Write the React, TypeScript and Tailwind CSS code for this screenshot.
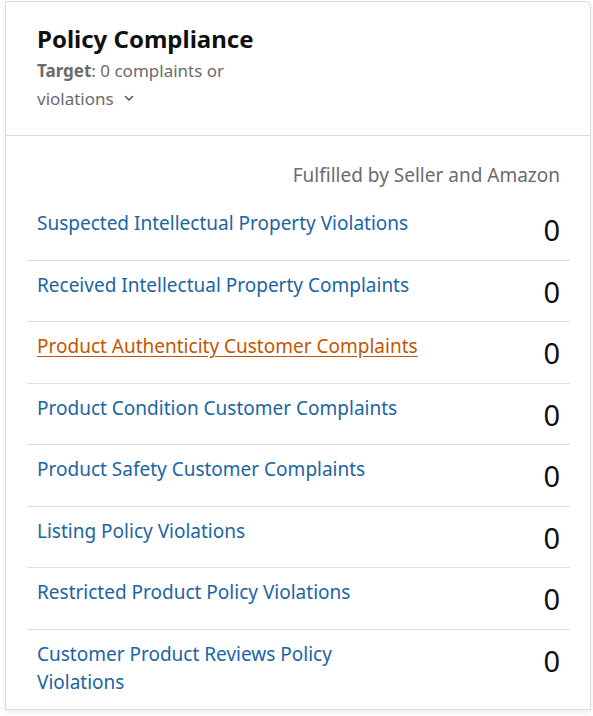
import React from 'react';

const rows = [
    { label: 'Suspected Intellectual Property Violations', count: 0 },
    { label: 'Received Intellectual Property Complaints', count: 0 },
    { label: 'Product Authenticity Customer Complaints', count: 0, active: true },
    { label: 'Product Condition Customer Complaints', count: 0 },
    { label: 'Product Safety Customer Complaints', count: 0 },
    { label: 'Listing Policy Violations', count: 0 },
    { label: 'Restricted Product Policy Violations', count: 0 },
    { label: 'Customer Product Reviews Policy Violations', count: 0, narrow: true },
];

function ChevronDown() {
    return (
        <svg className="inline-block ml-[10px] mb-[3px]" width="10" height="7" viewBox="0 0 10 7" fill="none">
            <path d="M1.5 1.5 L5 5 L8.5 1.5" stroke="#565959" strokeWidth="1.6" strokeLinecap="round" strokeLinejoin="round" />
        </svg>
    );
}

export default function App() {
    return (
        <div className="min-h-[716px] bg-white pl-[5px] pt-[1px] pr-[2px] font-['Noto_Sans','Open_Sans',sans-serif]">
            <div className="border border-[#dddddd] rounded-tr-[6px] bg-white shadow-[0_2px_6px_rgba(0,0,0,0.08)]">
                {/* header */}
                <div className="px-[31px] pt-[21px] pb-[22px] border-b border-[#dcdcdc]">
                    <h2 className="text-[24px] leading-[32px] font-bold text-[#0f1111]">Policy Compliance</h2>
                    <p className="max-w-[230px] text-[17px] leading-[28px] text-[#6b6b6b] mt-[2px]">
                        <span className="font-bold">Target</span>: 0 complaints or violations
                        <ChevronDown />
                    </p>
                </div>

                {/* body */}
                <div className="pl-[21px] pr-[20px] pt-[25px]">
                    <div className="text-right pr-[10px] text-[19px] leading-[28px] text-[#6b6b6b]">
                        Fulfilled by Seller and Amazon
                    </div>
                    <div className="mt-[10px]">
                        {rows.map((row, i) => (
                            <div
                                key={row.label}
                                className={
                                    'flex justify-between items-start px-[10px] pt-[10px] pb-[13.5px] ' +
                                    (i < rows.length - 1 ? 'border-b border-[#dedede]' : '')
                                }
                            >
                                <a
                                    href="#"
                                    className={
                                        'text-[19px] leading-[28px] ' +
                                        (row.narrow ? 'max-w-[310px] ' : '') +
                                        (row.active
                                            ? 'text-[#c45500] underline underline-offset-[3px]'
                                            : 'text-[#1c64a3]')
                                    }
                                >
                                    {row.label}
                                </a>
                                <span className="mt-[5px] text-[29px] leading-[32px] text-[#0f1111]">{row.count}</span>
                            </div>
                        ))}
                    </div>
                </div>
            </div>
        </div>
    );
}
